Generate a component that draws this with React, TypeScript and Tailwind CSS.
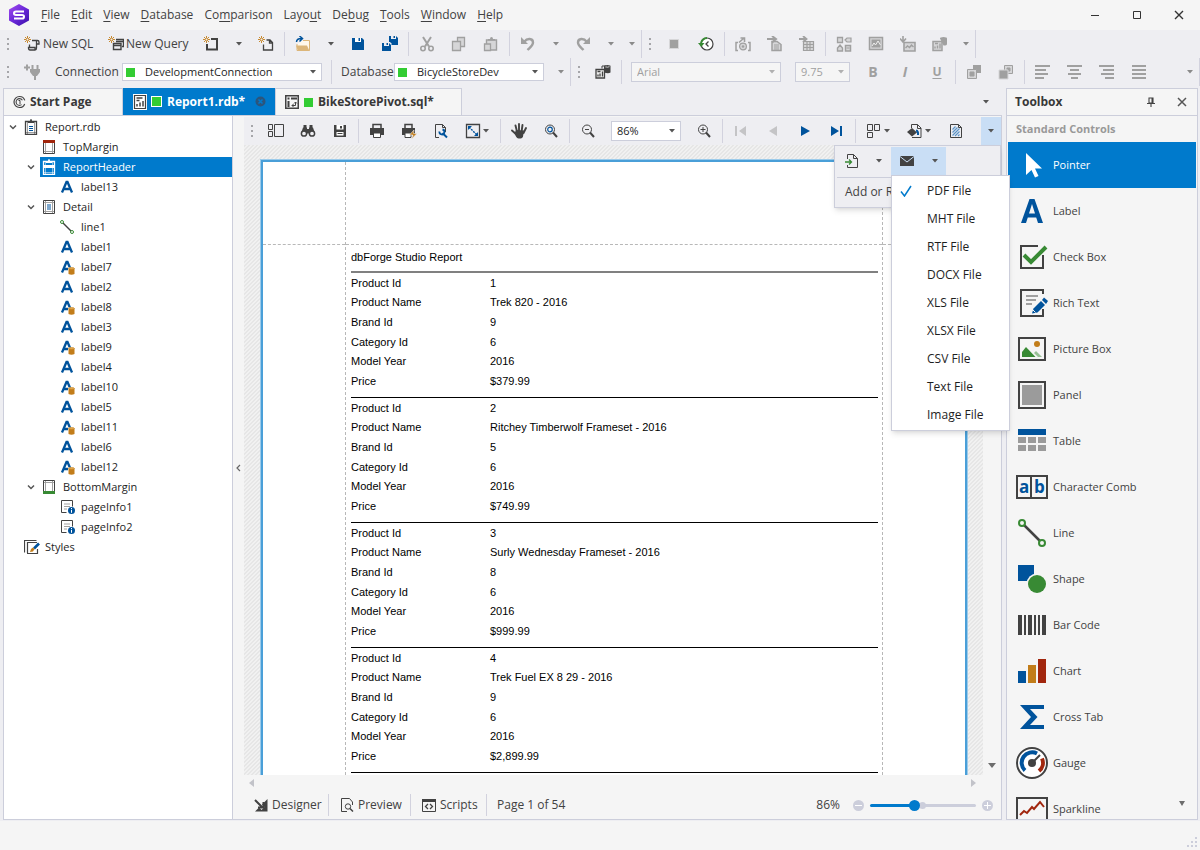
import { useState, type ReactNode } from "react";
import { clsx } from "clsx";

const DARK = "#424242";
const GREY = "#a0a0a0";
const PALE = "#d6d6d8";
const BLUE = "#00539c";
const GREEN = "#388a34";
const ORANGE = "#c27d1a";
const RED = "#a1260d";

type IconProps = { children: ReactNode; w?: number; h?: number };

const Icon = ({ children, w = 16, h = 16 }: IconProps) => (
  <svg width={w} height={h} viewBox={`0 0 ${w} ${h}`} fill="none" aria-hidden="true" className="shrink-0">
    {children}
  </svg>
);

const Caret = ({ className = "text-[#555]" }: { className?: string }) => (
  <svg width="6" height="4" viewBox="0 0 6 4" aria-hidden="true" className={clsx("shrink-0", className)}>
    <path d="M0 0h6L3 3.5z" fill="currentColor" />
  </svg>
);

/* ---------- toolbar icons ---------- */

const Spark = () => (
  <>
    <path d="M3.500 0v7M0 3.500h7M1 1l5 5M6 1L1 6" stroke={ORANGE} strokeWidth=".9" />
    <circle cx="3.500" cy="3.500" r="1" fill="#eeeef2" />
  </>
);

const icons = {
  newSql: (
    <Icon>
      <Spark />
      <path d="M8 4.500h5.500q1.500 0 1.500 1.500v2h-2.500M12.500 5v7q0 2-1.500 2H6q-1.500 0-1.500-2v-.500h6.500V14M5.500 11V8.500" stroke={DARK} strokeWidth="1.300" />
    </Icon>
  ),
  newQuery: (
    <Icon>
      <Spark />
      <path d="M8 3.500h7.500v7H14M8 5.500h7.500M5.500 7.500h7.500v6H5.500zM5.500 9.500H13" stroke={DARK} strokeWidth="1.400" />
    </Icon>
  ),
  newObject: (
    <Icon>
      <Spark />
      <path d="M8 3h6v10.500H4V8" stroke={DARK} strokeWidth="2" />
    </Icon>
  ),
  newDocument: (
    <Icon>
      <Spark />
      <path d="M8.500 4H12l2.500 2.500V14h-9V8.500M11.500 4v3h3" stroke={DARK} strokeWidth="1.300" />
    </Icon>
  ),
  open: (
    <Icon>
      <path d="M8 4.500h6.500v10H2V8" fill="#fff8ec" stroke="#dcb67a" />
      <path d="M1 9.500h11l2.500 5.500H3z" fill="#dcb67a" />
      <path d="M1.500 6c0-3 2-3.500 5-3.500M4.500 0L7.500 2.500l-3 3" stroke={BLUE} strokeWidth="1.500" />
    </Icon>
  ),
  save: (
    <Icon>
      <path d="M2 2h10l2 2v10H2z" fill={BLUE} />
      <path d="M5 2h6v4H5z" fill="#fff" />
      <path d="M8.500 2H10v3H8.500z" fill={BLUE} />
    </Icon>
  ),
  saveAll: (
    <Icon>
      <path d="M7 0h7l2 2v7H7z" fill={BLUE} />
      <path d="M9 0h5v3H9z" fill="#eeeef2" />
      <path d="M11.500 0H13v2h-1.500z" fill={BLUE} />
      <path d="M0 6h8l1.500 1.500V16H0z" fill="#eeeef2" />
      <path d="M0 7h7l2 2v6H0z" fill={BLUE} />
      <path d="M2 7h5v3H2z" fill="#eeeef2" />
      <path d="M4.500 7H6v2H4.500z" fill={BLUE} />
    </Icon>
  ),
  cut: (
    <Icon>
      <path d="M4 1l6 9.500M12 1L6 10.500" stroke={GREY} strokeWidth="2" />
      <circle cx="4" cy="12.500" r="2.200" stroke={GREY} strokeWidth="1.600" />
      <circle cx="12" cy="12.500" r="2.200" stroke={GREY} strokeWidth="1.600" />
    </Icon>
  ),
  copy: (
    <Icon>
      <path d="M6.500 1.500h7v9h-7z" fill={PALE} stroke={GREY} strokeWidth="1.300" />
      <path d="M1.500 5.500h8v9h-8z" fill={PALE} stroke={GREY} strokeWidth="1.300" />
    </Icon>
  ),
  paste: (
    <Icon>
      <path d="M3.500 4h10v10h-10z" fill={PALE} stroke={GREY} strokeWidth="1.400" />
      <path d="M5 4.500V3h2q0-2 1.500-2T10 3h2v1.500z" fill={GREY} />
      <path d="M1.500 8h6v6.500h-6z" fill={PALE} stroke={GREY} strokeWidth="1.300" />
    </Icon>
  ),
  undo: (
    <Icon>
      <path d="M1 1v7h7z" fill={GREY} />
      <path d="M4.500 5.500C7 2 13 2 13 6.500c0 3-3 5-5.500 7.500" stroke={GREY} strokeWidth="2.400" />
    </Icon>
  ),
  redo: (
    <Icon>
      <path d="M15 1v7H8z" fill={GREY} />
      <path d="M11.500 5.500C9 2 3 2 3 6.500c0 3 3 5 5.500 7.500" stroke={GREY} strokeWidth="2.400" />
    </Icon>
  ),
  stop: (
    <Icon>
      <path d="M3.500 3.500h9v9h-9z" fill={GREY} stroke={PALE} />
    </Icon>
  ),
  history: (
    <Icon>
      <circle cx="9" cy="8" r="6" stroke={DARK} strokeWidth="1.200" fill="#fff" />
      <path d="M9 2a6 6 0 0 0-6 6" stroke={GREEN} strokeWidth="2" />
      <path d="M0 7h6.500L3.200 11z" fill={GREEN} />
      <path d="M10.500 5.500L8 8l2.500 2.500" stroke={DARK} strokeWidth="1.300" />
    </Icon>
  ),
  mail: (
    <Icon>
      <path d="M3 6.500H1v8h2M13 6.500h2v8h-2" stroke={GREY} strokeWidth="1.500" />
      <circle cx="8" cy="10.500" r="3.400" stroke={GREY} strokeWidth="1.200" fill={PALE} />
      <circle cx="8" cy="10.500" r="1.300" fill={GREY} />
      <path d="M4 6.500L8.500 2.500M5.500 2h4v4" stroke={GREY} strokeWidth="1.600" />
    </Icon>
  ),
  importDoc: (
    <Icon>
      <path d="M5 5.500h5l4 3v6H5z" stroke={GREY} strokeWidth="1.500" fill={PALE} />
      <path d="M7 9h5M7 11h5M7 13h5" stroke={GREY} />
      <path d="M0 3h8M5 0l4 3-4 3.500" stroke={GREY} strokeWidth="2" />
    </Icon>
  ),
  importGrid: (
    <Icon>
      <path d="M4.500 5.500h10v9h-10zM8 5v9.500M11 5v9.500M4.500 8.500h10M4.500 11.500h10" stroke={GREY} strokeWidth="1.200" fill={PALE} />
      <path d="M0 3h7M4 0l3.500 3L4 6" stroke={GREY} strokeWidth="1.800" />
    </Icon>
  ),
  diagram: (
    <Icon>
      <path d="M1.500 1.500h5v5h-5z" stroke={GREY} strokeWidth="1.300" fill={PALE} />
      <path d="M9.500 9.500h5v5.500h-5z" stroke={GREY} strokeWidth="1.500" fill={PALE} />
      <path d="M9 4l2-2h4v4h-4z" stroke={GREY} strokeWidth="1.200" fill={PALE} />
      <path d="M4 9l2.500 3v3h-5v-3z" stroke={GREY} strokeWidth="1.400" fill={PALE} />
      <path d="M10.500 12h3" stroke={GREY} />
    </Icon>
  ),
  chartBox: (
    <Icon>
      <path d="M1.500 1.500h13v12h-13z" stroke={GREY} strokeWidth="1.500" fill={PALE} />
      <path d="M3.500 3.500h9v8h-9z" fill={GREY} />
      <path d="M4 10l2-3 1.500 2L10 5l2.500 4" stroke="#eee" />
    </Icon>
  ),
  chartImport: (
    <Icon>
      <path d="M4 6.500h11v8.500H4z" stroke={GREY} strokeWidth="1.600" fill={PALE} />
      <path d="M5.500 12l2-2 2 1.500 2-2.500 2 2" stroke={GREY} strokeWidth="1.400" />
      <path d="M3 0v6M0 2.500L3 6l3-3.500" stroke={GREY} strokeWidth="1.600" />
    </Icon>
  ),
  reportDb: (
    <Icon>
      <path d="M8 2.500q0-1.500 3.500-1.500t3.500 1.500v5.500q0 1.500-3.500 1.500z" fill={GREY} />
      <path d="M1 5.500h9v9H1z" stroke={GREY} strokeWidth="1.500" fill={PALE} />
      <path d="M3 12.500v-2M5.500 12.500v-3M8 12.500v-5M3 7.500h3" stroke={GREY} strokeWidth="1.400" />
    </Icon>
  ),
  plug: (
    <Icon>
      <path d="M0 3.500h6M3 .500v6" stroke={GREY} strokeWidth="2" />
      <path d="M6 5h10v3l-3 4h-4L6 8z" fill={GREY} />
      <path d="M8.500 1v4M13.500 1v4M11 11v5" stroke={GREY} strokeWidth="2" />
    </Icon>
  ),
  reportData: (
    <Icon>
      <path d="M9 2.500q0-1.500 3.500-1.500T15.500 2.500v6q-2 1.500-6.500 0z" fill={DARK} />
      <path d="M10 2.700q2.500 1 4.500 0" stroke="#eee" strokeWidth=".8" />
      <path d="M7 4.500V2h4" stroke={DARK} />
      <path d="M1 5.500h8.500v8.500H1z" stroke={DARK} strokeWidth="1.300" fill="#eee" />
      <path d="M3 12.500v-2M5 12.500v-3M7.500 12.500v-5M2.500 7.500h3" stroke={DARK} strokeWidth="1.300" />
    </Icon>
  ),
  toFront: (
    <Icon>
      <path d="M7 1h8v8H7z" fill={GREY} />
      <path d="M1.500 5.500h9v9h-9z" fill={PALE} stroke={GREY} />
      <path d="M4 8h4v4H4z" fill={GREY} stroke={GREY} />
    </Icon>
  ),
  toBack: (
    <Icon>
      <path d="M6.500 1.500h8v8h-8z" fill={PALE} stroke={GREY} />
      <path d="M9 4h3v3H9z" fill={GREY} stroke={GREY} />
      <path d="M1 6h9v9H1z" fill={GREY} stroke={PALE} />
    </Icon>
  ),
  alignLeft: (
    <Icon>
      <path d="M0 2h15M0 6h11M0 10h13M0 14h9" stroke={GREY} strokeWidth="2" />
    </Icon>
  ),
  alignCenter: (
    <Icon>
      <path d="M0 2h15M3 6h9M1 10h13M4 14h7" stroke={GREY} strokeWidth="2" />
    </Icon>
  ),
  alignRight: (
    <Icon>
      <path d="M0 2h15M4 6h11M2 10h13M6 14h9" stroke={GREY} strokeWidth="2" />
    </Icon>
  ),
  justify: (
    <Icon>
      <path d="M1 2h14M1 6h14M1 10h14M1 14h14" stroke={GREY} strokeWidth="2" />
    </Icon>
  ),

  /* preview toolbar */
  documentMap: (
    <Icon>
      <path d="M.500 1.500h4v5h-4zM.500 8.500h4v5h-4zM6.500 1.500h9v12h-9z" stroke={DARK} />
    </Icon>
  ),
  search: (
    <Icon>
      <path d="M3.500 2h3v3h-3zM9.500 2h3v3h-3z" fill={DARK} />
      <path d="M3 4.500h4V6h2V4.500h4l2 6H1z" fill={DARK} />
      <circle cx="4" cy="10.500" r="2.600" stroke={DARK} strokeWidth="1.500" fill="#eeeef2" />
      <circle cx="12" cy="10.500" r="2.600" stroke={DARK} strokeWidth="1.500" fill="#eeeef2" />
    </Icon>
  ),
  saveDark: (
    <Icon>
      <path d="M2 2h12v12H2z" fill={DARK} />
      <path d="M4.500 2h7v4.500h-7zM4.500 9h7v3.500h-7z" fill="#fff" />
      <path d="M8 3h2v2.500H8zM5.500 10h5v1h-5z" fill={DARK} />
    </Icon>
  ),
  print: (
    <Icon>
      <path d="M4 5V1.500h8V5" stroke={DARK} strokeWidth="1.500" />
      <path d="M1 5h14v7H1z" fill={DARK} />
      <path d="M4.500 10h7v4.500h-7z" fill="#fff" stroke={DARK} />
    </Icon>
  ),
  quickPrint: (
    <Icon>
      <path d="M4 5V1.500h7V5" stroke={DARK} strokeWidth="1.500" />
      <path d="M1 5h13v7H1z" fill={DARK} />
      <path d="M4 10h6v4.500H4z" fill="#fff" stroke={DARK} />
      <path d="M13 7L8.500 12H12l-1.500 4L16 10.500h-3.500z" fill={ORANGE} stroke="#eeeef2" strokeWidth=".6" />
    </Icon>
  ),
  pageSetup: (
    <Icon>
      <path d="M6 14.500H2.500v-13h7l3 3V9M9.500 1.500v3h3" stroke={DARK} />
      <path d="M9.500 10l4.500 4.500" stroke={BLUE} strokeWidth="2" />
      <path d="M6.500 8.500a2.500 2.500 0 1 0 3-2" stroke={BLUE} strokeWidth="1.800" />
    </Icon>
  ),
  scale: (
    <Icon>
      <path d="M1.500 1.500h13v13h-13z" stroke={DARK} strokeWidth="1.300" />
      <path d="M4 4l8 8" stroke={BLUE} strokeWidth="1.400" strokeDasharray="2 1" />
      <path d="M3 3h4L3 7zM13 13H9l4-4z" fill={BLUE} />
    </Icon>
  ),
  hand: (
    <Icon>
      <path d="M4.500 2.500l1.500 6M8 1v7M11.500 2L10.500 9M15 5l-2.500 5M1 7.500L6 12" stroke={DARK} strokeWidth="1.900" strokeLinecap="round" />
      <path d="M5 7l8 .5-1 6q-.5 2-2.500 2h-2q-1.500 0-2.500-2l-1.500-3z" fill={DARK} />
    </Icon>
  ),
  magnifier: (
    <Icon>
      <circle cx="7" cy="6.500" r="4.500" stroke={DARK} />
      <circle cx="7" cy="6.500" r="2.300" stroke={BLUE} strokeWidth="1.200" />
      <path d="M10 9.500L14 14" stroke={DARK} strokeWidth="2" />
    </Icon>
  ),
  zoomOut: (
    <Icon>
      <circle cx="7" cy="6.500" r="4.500" stroke={DARK} />
      <path d="M5 6.500h4" stroke={DARK} />
      <path d="M10 9.500L14 14" stroke={DARK} strokeWidth="2" />
    </Icon>
  ),
  zoomIn: (
    <Icon>
      <circle cx="7" cy="6.500" r="4.500" stroke={DARK} />
      <path d="M4.500 6.500h5M7 4v5" stroke={DARK} />
      <path d="M10 9.500L14 14" stroke={DARK} strokeWidth="2" />
    </Icon>
  ),
  first: (
    <Icon>
      <path d="M2 3h2v10H2zM13 3v10L6 8z" fill="#c4c4c6" />
    </Icon>
  ),
  previous: (
    <Icon>
      <path d="M12 3v10L4 8z" fill="#c4c4c6" />
    </Icon>
  ),
  next: (
    <Icon>
      <path d="M4 3v10l9-5z" fill={BLUE} />
    </Icon>
  ),
  last: (
    <Icon>
      <path d="M2 3v10l8-5zM11 3h2v10h-2z" fill={BLUE} />
    </Icon>
  ),
  pages: (
    <Icon>
      <path d="M1.500 1.500h5v6h-5zM8.500 1.500h5v6h-5zM1.500 9.500h5v5h-5z" stroke={DARK} />
    </Icon>
  ),
  pageColor: (
    <Icon>
      <path d="M4.500 5V1.500h6l3.500 3.500v9.500H5M10.500 1.500v4H14" stroke={DARK} />
      <path d="M0 9l5-4 5 4.500-5 4z" fill={DARK} />
      <path d="M9 7.500q2.500.5 2 4.500" stroke={BLUE} strokeWidth="2" />
    </Icon>
  ),
  watermark: (
    <Icon>
      <path d="M2.500 1.500h8l3 3v10h-11zM10.500 1.500v3h3" stroke={DARK} />
      <path d="M4.500 6.500l3-3M4.500 9.500l5-5M4.500 12.500l7-7M7 13l4.500-4.500M10 13l1.500-1.500" stroke="#5a93c7" strokeWidth="1.200" />
    </Icon>
  ),
  exportDoc: (
    <Icon>
      <path d="M3.500 6V1.500h6l4 4v9h-10V12M9.500 1.500v4h4" stroke={DARK} />
      <path d="M1 9h6M5 6.500L7.500 9 5 11.500" stroke={GREEN} strokeWidth="1.300" />
    </Icon>
  ),
  envelope: (
    <Icon>
      <path d="M1 3h14v10H1z" fill={DARK} />
      <path d="M1 3.500l7 5.500 7-5.500" stroke="#c9def5" />
    </Icon>
  ),
  designer: (
    <Icon w={14} h={14}>
      <path d="M13.500 1v12.500H1z" fill={DARK} />
      <path d="M1 2.500l8 8" stroke="#f5f5f5" strokeWidth="4" />
      <path d="M1 2l7.500 7.500M4 9.500h5.500V4" stroke={DARK} strokeWidth="2" />
    </Icon>
  ),
  preview: (
    <Icon w={14} h={14}>
      <path d="M12.500 7V4L9.500.500h-8v13H7" stroke={DARK} />
      <circle cx="8" cy="8.500" r="2.700" stroke={DARK} />
      <path d="M10 10.500l3 3" stroke={DARK} strokeWidth="1.500" />
    </Icon>
  ),
  scripts: (
    <Icon w={14} h={14}>
      <path d="M.500 1.500h13v12H.500z" stroke={DARK} />
      <path d="M0 1h14v3H0z" fill={DARK} />
      <path d="M6 6L3.500 8.500 6 11M8 6l2.500 2.500L8 11" stroke={DARK} strokeWidth="1.300" />
    </Icon>
  ),
};

type IconName = keyof typeof icons;

/* ---------- tree icons ---------- */

const TreeIcon = ({ kind }: { kind: string }) => {
  switch (kind) {
    case "report":
    case "header": {
      const c = kind === "header" ? "#fff" : DARK;
      return (
        <Icon w={14}>
          <path d="M1.500 2.500h11v13h-11z" stroke={c} strokeWidth="1.300" />
          <path d="M3.500 3v12.500M10.500 3v12.500M1.500 13.500h11" stroke={c} strokeOpacity=".5" />
          <path d="M4 4V2h2q0-2 1-2t1 2h2v2z" fill={c} />
          {kind === "header" ? (
            <path d="M2 6h10v3H2z" fill="#fff" />
          ) : (
            <path d="M5 7.500h4M5 9.500h4M5 11.500h4" stroke={BLUE} />
          )}
        </Icon>
      );
    }
    case "top":
    case "bottom":
      return (
        <Icon w={14}>
          <path d="M1.500 1.500h11v13h-11z" stroke={DARK} />
          <path d="M3.500 2v12M10.500 2v12M2 3.500h10M2 12.500h10" stroke={GREY} />
          {kind === "top" ? <path d="M1 1h12v3H1z" fill={RED} /> : <path d="M1 12h12v3H1z" fill={GREEN} />}
        </Icon>
      );
    case "detail":
      return (
        <Icon w={14}>
          <path d="M1.500 1.500h11v13h-11z" stroke={DARK} />
          <path d="M3.500 2v12M10.500 2v12M2 3.500h10M2 12.500h10" stroke={GREY} />
          <path d="M5 6h4M5 8h4M5 10h4" stroke={BLUE} strokeWidth="1.200" />
        </Icon>
      );
    case "line":
      return (
        <Icon w={14}>
          <path d="M3 4l8 8" stroke={DARK} strokeWidth="1.500" />
          <circle cx="2" cy="3" r="1.500" stroke={GREEN} />
          <circle cx="12" cy="13" r="1.500" stroke={GREEN} />
        </Icon>
      );
    case "bound":
    case "label":
      return (
        <Icon w={16}>
          <path d="M2 13.500L6.500 3h1L12 13.500M3.800 10h6.400" stroke={BLUE} strokeWidth="2.300" />
          {kind === "bound" && (
            <>
              <path d="M8 8.500h7v7.500H8z" fill="#fff" />
              <path d="M8.500 9.500h6V15q-3 1.500-6 0z" fill={ORANGE} />
              <ellipse cx="11.500" cy="9.500" rx="3" ry="1" fill="#e0a850" stroke={ORANGE} strokeWidth=".6" />
            </>
          )}
        </Icon>
      );
    case "pageInfo":
      return (
        <Icon>
          <path d="M1.500 1.500h11v6M6.500 13.500h-5v-12" stroke={DARK} />
          <path d="M4 5h6M4 7.500h6M4 10h3" stroke={GREY} />
          <circle cx="11.500" cy="11.500" r="3.500" fill={BLUE} />
          <path d="M11.500 9v1M11.500 10.800v3" stroke="#fff" />
        </Icon>
      );
    default:
      return (
        <Icon>
          <path d="M12.500 1.500h-12v12M3 14.500h10.500V10M3.500 14V3.500h9.500" stroke={DARK} strokeWidth="1.200" />
          <path d="M15 4.500L10 9.500" stroke={BLUE} strokeWidth="2.600" />
          <path d="M6 13l1-3 2-1.500 1.500 1.500L9 12.500z" fill={ORANGE} />
        </Icon>
      );
  }
};

/* ---------- toolbox icons ---------- */

const toolIcons: Record<string, ReactNode> = {
  Pointer: <path d="M10 4v22l5.500-5 3.500 7.500 3.500-1.500L19 19.500h7z" fill="#fff" />,
  Label: <path d="M5 28L13.500 4h5L27 28h-5l-1.800-5.500h-8.400L10 28zM13 18.500h6L16 9z" fill={BLUE} fillRule="evenodd" />,
  "Check Box": (
    <>
      <path d="M22 5H5v22h22V14" stroke={DARK} strokeWidth="2" />
      <path d="M8 14l7 7L30 6" stroke={GREEN} strokeWidth="4" />
    </>
  ),
  "Rich Text": (
    <>
      <path d="M27 7V3H5v26h22v-7" stroke={DARK} strokeWidth="2" />
      <path d="M10 9h12M10 13h10M10 17h6" stroke={GREY} strokeWidth="2" />
      <path d="M16 26.500l1.500-5L25 14l4 4-7.500 7.500z" fill={BLUE} />
      <path d="M26 13l2-2.500 4 3.500-2 3z" fill={BLUE} />
      <path d="M17 23l2.500 2.500" stroke="#f5f5f5" />
    </>
  ),
  "Picture Box": (
    <>
      <path d="M3 5h26v22H3z" stroke={DARK} strokeWidth="2" />
      <path d="M6 24v-5l4-5 9.500 10z" fill={GREEN} />
      <path d="M18 20l2-2 6 6h-4z" fill={GREEN} fillOpacity=".5" />
      <circle cx="21" cy="11" r="3" fill={ORANGE} />
    </>
  ),
  Panel: (
    <>
      <path d="M3 3h26v26H3z" stroke={DARK} strokeWidth="2" />
      <path d="M6 6h20v20H6z" fill="#9b9b9b" />
    </>
  ),
  Table: (
    <>
      <path d="M2 4h28v6H2z" fill={BLUE} />
      <path d="M2 12h8v6H2zM12 12h8v6h-8zM22 12h8v6h-8zM2 20h8v6H2zM12 20h8v6h-8zM22 20h8v6h-8z" fill="#9b9b9b" />
    </>
  ),
  "Character Comb": (
    <>
      <path d="M1 5h30v22H1zM15 5v22" stroke={DARK} strokeWidth="2" />
      <text x="3" y="22" fontSize="17" fontWeight="700" fontFamily="Open Sans, sans-serif" fill={BLUE}>a</text>
      <text x="18" y="22" fontSize="17" fontWeight="700" fontFamily="Open Sans, sans-serif" fill={BLUE}>b</text>
    </>
  ),
  Line: (
    <>
      <path d="M8 8l16 16" stroke={DARK} strokeWidth="2.500" />
      <circle cx="6" cy="6" r="3" stroke={GREEN} strokeWidth="2" fill="#f5f5f5" />
      <circle cx="26" cy="26" r="3" stroke={GREEN} strokeWidth="2" fill="#f5f5f5" />
    </>
  ),
  Shape: (
    <>
      <path d="M2 2h16v16H2z" fill={BLUE} />
      <circle cx="21" cy="21" r="10.500" fill="#f5f5f5" />
      <circle cx="21" cy="21" r="9" fill={GREEN} />
    </>
  ),
  "Bar Code": <path d="M2 6h4v20H2zM8 6h2v20H8zM12 6h4v20h-4zM18 6h2v20h-2zM22 6h2v20h-2zM26 6h4v20h-4z" fill={DARK} />,
  Chart: (
    <>
      <path d="M2 16h8v12H2z" fill={BLUE} />
      <path d="M12 10h8v18h-8z" fill={ORANGE} />
      <path d="M22 4h8v24h-8z" fill={RED} />
    </>
  ),
  "Cross Tab": <path d="M4 4h24v4H14l7.500 8L14 24h14v4H4l11-12z" fill={BLUE} />,
  Gauge: (
    <>
      <circle cx="16" cy="16" r="15" stroke={DARK} strokeWidth="2" fill="#fff" />
      <path d="M9 23.500A10.500 10.500 0 0 1 21 6.500" stroke={BLUE} strokeWidth="4" />
      <path d="M26 11.500a10.500 10.500 0 0 1-3 12.500" stroke={RED} strokeWidth="4" />
      <circle cx="16" cy="16" r="4" fill={DARK} />
      <path d="M16 16l8-8" stroke={DARK} strokeWidth="2" />
    </>
  ),
  Sparkline: (
    <>
      <path d="M1 5h30v26H1z" stroke={DARK} strokeWidth="2" />
      <path d="M4 22l4-4 3 2 5-6 2 2 6-7 4 5" stroke={RED} strokeWidth="2" />
    </>
  ),
};

/* ---------- building blocks ---------- */

const Separator = () => <span className="mx-[2px] h-6 w-px shrink-0 bg-[#d2d2de]" />;

const EndSeparator = () => <span className="h-7 w-px shrink-0 bg-[#d2d2de]" />;

const Grip = () => (
  <span className="flex w-4 shrink-0 flex-col items-center gap-[3px]">
    <span className="size-[2px] bg-[#a6a6aa]" />
    <span className="size-[2px] bg-[#a6a6aa]" />
    <span className="size-[2px] bg-[#a6a6aa]" />
  </span>
);

const ToolButton = ({ name, label }: { name: IconName; label?: string }) => (
  <button type="button" aria-label={label ?? name} className="flex h-6 w-8 shrink-0 items-center justify-center">
    {icons[name]}
  </button>
);

const CaretButton = ({ label, className }: { label: string; className?: string }) => (
  <button type="button" aria-label={label} className="flex h-6 w-[23px] shrink-0 items-center justify-center">
    <Caret className={className} />
  </button>
);

const MoreButton = () => (
  <button type="button" aria-label="More" className="flex h-6 w-[19px] shrink-0 items-center justify-center">
    <Caret className="text-[#8a8a8a]" />
  </button>
);

const SplitButton = ({ name }: { name: IconName }) => (
  <button type="button" aria-label={name} className="flex h-6 w-[41px] shrink-0 items-center gap-[2px] pl-2">
    {icons[name]}
    <Caret />
  </button>
);

type ComboProps = { id: string; label: string; value: string; className: string; dot?: boolean; disabled?: boolean };

const Combo = ({ id, label, value, className, dot, disabled }: ComboProps) => (
  <span className={clsx("relative flex shrink-0 items-center", className)}>
    <select
      id={id}
      aria-label={label}
      disabled={disabled}
      className={clsx(
        "h-full w-full appearance-none border border-[#cccedb] text-[11px] leading-4 outline-none",
        dot ? "pl-[22px]" : "pl-[5px]",
        disabled ? "bg-[#f5f5f5] text-[#a0a0a0] opacity-100" : "bg-white text-[#1e1e1e]"
      )}
    >
      <option>{value}</option>
    </select>
    {dot && <span className="pointer-events-none absolute left-1 size-[9px] bg-[#33cc33]" />}
    <span className="pointer-events-none absolute right-[6px]">
      <Caret className={disabled ? "text-[#b0b0b0]" : "text-[#555]"} />
    </span>
  </span>
);

/* ---------- title and toolbars ---------- */

const menuItems: [string, string, string][] = [
  ["", "F", "ile"],
  ["", "E", "dit"],
  ["", "V", "iew"],
  ["", "D", "atabase"],
  ["Co", "m", "parison"],
  ["Layo", "u", "t"],
  ["De", "b", "ug"],
  ["", "T", "ools"],
  ["", "W", "indow"],
  ["", "H", "elp"],
];

const TitleBar = () => (
  <header className="flex h-[30px] shrink-0 items-center bg-[#f5f5f5] pl-2">
    <svg width="22" height="24" viewBox="0 0 22 24" aria-hidden="true">
      <defs>
        <linearGradient id="brand" x1="0" y1="0" x2="1" y2="1">
          <stop offset="0" stopColor="#a44cf0" />
          <stop offset=".5" stopColor="#6a28d8" />
          <stop offset="1" stopColor="#3a10a8" />
        </linearGradient>
      </defs>
      <path d="M11 1l10 5.500v11L11 23 1 17.500v-11z" fill="url(#brand)" />
      <path d="M16 8.500H8q-2 0-2 1.700T8 12h6q2 0 2 1.800t-2 1.700H6" stroke="#fff" strokeWidth="2" fill="none" />
    </svg>
    <nav className="ml-[6px] flex gap-px">
      {menuItems.map(([before, key, after]) => (
        <button key={before + key + after} type="button" className="px-[5px] text-xs">
          {before}
          <span className="underline underline-offset-2">{key}</span>
          {after}
        </button>
      ))}
    </nav>
    <div className="ml-auto flex">
      <button type="button" aria-label="Minimize" className="flex w-[42px] justify-center">
        <svg width="10" height="10" viewBox="0 0 10 10"><path d="M1 5.500h8" stroke="#333" /></svg>
      </button>
      <button type="button" aria-label="Maximize" className="flex w-[42px] justify-center">
        <svg width="10" height="10" viewBox="0 0 10 10" fill="none"><path d="M1.500 1.500h7v7h-7z" stroke="#333" /></svg>
      </button>
      <button type="button" aria-label="Close" className="flex w-[42px] justify-center">
        <svg width="10" height="10" viewBox="0 0 10 10"><path d="M1 1l8 8M9 1L1 9" stroke="#333" strokeWidth="1.400" /></svg>
      </button>
    </div>
  </header>
);

const StandardToolbar = () => (
  <div className="flex h-7 shrink-0 items-center">
    <Grip />
    <button type="button" className="flex h-6 w-[84px] items-center gap-[3px] pl-2 text-xs whitespace-nowrap">
      {icons.newSql}New SQL
    </button>
    <button type="button" className="flex h-6 w-[95px] items-center gap-[2px] pl-2 text-xs whitespace-nowrap">
      {icons.newQuery}New Query
    </button>
    <ToolButton name="newObject" />
    <CaretButton label="New object options" />
    <ToolButton name="newDocument" />
    <Separator />
    <ToolButton name="open" />
    <CaretButton label="Open options" />
    <ToolButton name="save" />
    <ToolButton name="saveAll" />
    <Separator />
    <ToolButton name="cut" />
    <ToolButton name="copy" />
    <ToolButton name="paste" />
    <Separator />
    <ToolButton name="undo" />
    <CaretButton label="Undo options" className="text-[#8a8a8a]" />
    <ToolButton name="redo" />
    <CaretButton label="Redo options" className="text-[#8a8a8a]" />
    <MoreButton />
    <EndSeparator />
    <Grip />
    <ToolButton name="stop" />
    <ToolButton name="history" />
    <Separator />
    <ToolButton name="mail" />
    <ToolButton name="importDoc" />
    <ToolButton name="importGrid" />
    <Separator />
    <ToolButton name="diagram" />
    <ToolButton name="chartBox" />
    <ToolButton name="chartImport" />
    <ToolButton name="reportDb" />
    <MoreButton />
    <EndSeparator />
  </div>
);

const ConnectionToolbar = () => (
  <div className="flex h-7 shrink-0 items-center">
    <Grip />
    <ToolButton name="plug" />
    <label htmlFor="connection" className="w-[74px] shrink-0 pl-[7px] text-xs">Connection</label>
    <Combo id="connection" label="Connection" value="DevelopmentConnection" dot className="mr-[7px] h-[18px] w-[200px]" />
    <Separator />
    <label htmlFor="database" className="w-[60px] shrink-0 pl-[7px] text-xs">Database</label>
    <Combo id="database" label="Database" value="BicycleStoreDev" dot className="mr-[7px] h-[18px] w-[150px]" />
    <MoreButton />
    <EndSeparator />
    <Grip />
    <ToolButton name="reportData" />
    <Separator />
    <Combo id="font" label="Font" value="Arial" disabled className="ml-[7px] h-5 w-[150px]" />
    <Combo id="font-size" label="Font size" value="9.75" disabled className="mx-[14px] mr-[7px] h-5 w-[55px]" />
    <button type="button" className="w-8 shrink-0 text-sm font-bold text-[#a0a0a0]">B</button>
    <button type="button" className="w-8 shrink-0 text-sm font-bold text-[#a0a0a0] italic">I</button>
    <button type="button" className="w-8 shrink-0 text-xs font-bold text-[#a0a0a0] underline underline-offset-2">U</button>
    <Separator />
    <ToolButton name="toFront" />
    <ToolButton name="toBack" />
    <Separator />
    <ToolButton name="alignLeft" />
    <ToolButton name="alignCenter" />
    <ToolButton name="alignRight" />
    <ToolButton name="justify" />
    <span className="flex-1" />
    <MoreButton />
    <EndSeparator />
  </div>
);

const DocumentTabs = () => (
  <div className="flex h-[28px] shrink-0 items-stretch border-b border-[#cccedb] text-xs font-bold text-[#383838]">
    <button type="button" className="flex w-[120px] shrink-0 items-center gap-1 border border-b-0 border-[#cccedb] bg-[#f5f5f5] pl-[9px]">
      <Icon w={13} h={14}>
        <circle cx="6.500" cy="7" r="5.500" stroke={DARK} strokeWidth="1.200" strokeDasharray="30 4.500" strokeDashoffset="-2" />
        <circle cx="6.500" cy="7" r="3.400" stroke={DARK} strokeWidth="1.100" strokeDasharray="16 5" strokeDashoffset="-3" />
        <path d="M5.500 5.500H7V9" stroke={DARK} />
      </Icon>
      Start Page
    </button>
    <button type="button" className="flex w-[152px] shrink-0 items-center bg-[#007acc] pl-[10px] text-white">
      <Icon w={14} h={16}>
        <path d="M0 0h14v16H0z" fill="#fff" />
        <path d="M1.500 1.500h11v13h-11z" stroke={DARK} strokeWidth="1.200" />
        <path d="M3.500 4h6M3.500 6.500h3M4 12.500V10M7 12.500V8.500M10 12.500V7" stroke={DARK} strokeWidth="1.500" />
      </Icon>
      <span className="ml-1 size-[11px] border border-white bg-[#33cc33]" />
      <span className="ml-[5px]">Report1.rdb*</span>
      <svg width="11" height="11" viewBox="0 0 11 11" className="mr-[9px] ml-auto" aria-hidden="true">
        <circle cx="5.500" cy="5.500" r="5" fill="#2b557c" />
        <path d="M3.500 3.500l4 4M7.500 3.500l-4 4" stroke="#007acc" strokeWidth="1.500" />
      </svg>
    </button>
    <button type="button" className="flex w-[187px] shrink-0 items-center border border-b-0 border-[#cccedb] bg-[#f5f5f5] pl-[9px]">
      <Icon w={14} h={14}>
        <path d="M.750.750h12.500v12.500H.750z" stroke={DARK} strokeWidth="1.500" />
        <path d="M2.500 2.500h2v2h-2zM6 2.500h6v2H6zM2.500 6h2v6h-2z" fill={DARK} />
        <path d="M7 10.500h3.500V7M9 8.500L10.500 7 12 8.500M8.500 9L7 10.500 8.500 12" stroke={DARK} />
      </Icon>
      <span className="ml-[5px] size-[9px] bg-[#33cc33]" />
      <span className="ml-[5px]">BikeStorePivot.sql*</span>
    </button>
    <button type="button" aria-label="Open documents" className="ml-auto flex w-8 items-center justify-center">
      <Caret />
    </button>
  </div>
);

/* ---------- report tree ---------- */

type TreeNode = { text: string; kind: string; level: number; open?: boolean };

const tree: TreeNode[] = [
  { text: "Report.rdb", kind: "report", level: 0, open: true },
  { text: "TopMargin", kind: "top", level: 1 },
  { text: "ReportHeader", kind: "header", level: 1, open: true },
  { text: "label13", kind: "label", level: 2 },
  { text: "Detail", kind: "detail", level: 1, open: true },
  { text: "line1", kind: "line", level: 2 },
  { text: "label1", kind: "label", level: 2 },
  { text: "label7", kind: "bound", level: 2 },
  { text: "label2", kind: "label", level: 2 },
  { text: "label8", kind: "bound", level: 2 },
  { text: "label3", kind: "label", level: 2 },
  { text: "label9", kind: "bound", level: 2 },
  { text: "label4", kind: "label", level: 2 },
  { text: "label10", kind: "bound", level: 2 },
  { text: "label5", kind: "label", level: 2 },
  { text: "label11", kind: "bound", level: 2 },
  { text: "label6", kind: "label", level: 2 },
  { text: "label12", kind: "bound", level: 2 },
  { text: "BottomMargin", kind: "bottom", level: 1, open: true },
  { text: "pageInfo1", kind: "pageInfo", level: 2 },
  { text: "pageInfo2", kind: "pageInfo", level: 2 },
  { text: "Styles", kind: "styles", level: 0 },
];

const indents = ["pl-0", "pl-[18px]", "pl-[36px]"];

const ReportTree = () => {
  const [selected, setSelected] = useState("ReportHeader");
  return (
    <ul role="tree" className="w-[230px] shrink-0 border-x border-[#cccedb] bg-white pt-px text-[11px] leading-5 text-[#1e1e1e]">
      {tree.map((node) => (
        <li key={node.text} role="treeitem" className={clsx("flex h-5", indents[node.level])}>
          <span className="flex w-[18px] shrink-0 items-center justify-center">
            {node.open && (
              <svg width="8" height="6" viewBox="0 0 8 6" fill="none" aria-hidden="true">
                <path d="M1 1.500l3 3 3-3" stroke="#555" strokeWidth="1.500" />
              </svg>
            )}
          </span>
          <button
            type="button"
            onClick={() => setSelected(node.text)}
            className={clsx(
              "flex flex-1 items-center pl-[2px] text-left",
              selected === node.text && "bg-[#007acc] text-white"
            )}
          >
            <span className="flex w-[21px]">
              <TreeIcon kind={node.kind} />
            </span>
            {node.text}
          </button>
        </li>
      ))}
    </ul>
  );
};

/* ---------- preview ---------- */

const exportFormats = [
  "PDF File",
  "MHT File",
  "RTF File",
  "DOCX File",
  "XLS File",
  "XLSX File",
  "CSV File",
  "Text File",
  "Image File",
];

const OverflowPanel = () => (
  <div className="absolute top-7 right-0 z-10 w-[167px] border border-[#cccedb] bg-[#eeeef2] px-[2px] py-px shadow-md">
    <div className="relative flex h-7">
      <button type="button" aria-label="Export" className="flex w-[29px] items-center justify-center">
        {icons.exportDoc}
      </button>
      <button type="button" aria-label="Export options" className="flex w-[25px] items-center justify-center">
        <Caret />
      </button>
      <button type="button" aria-label="Send by e-mail" className="flex w-8 items-center justify-center bg-[#c9def5]">
        {icons.envelope}
      </button>
      <button type="button" aria-label="E-mail options" className="flex w-[23px] items-center justify-center bg-[#c9def5]">
        <Caret />
      </button>
      <ul role="menu" className="absolute top-7 left-[54px] w-[119px] border border-[#cccedb] bg-white py-px shadow-md">
        {exportFormats.map((format, i) => (
          <li key={format} role="none">
            <button type="button" role="menuitem" className="flex h-7 w-full items-center text-xs whitespace-nowrap text-[#1e1e1e]">
              <span className="flex w-[35px] pl-2">
                {i === 0 && (
                  <svg width="12" height="12" viewBox="0 0 12 12" fill="none" aria-hidden="true">
                    <path d="M1 6.500l3.500 4.500L11 1" stroke="#007acc" strokeWidth="1.500" />
                  </svg>
                )}
              </span>
              {format}
            </button>
          </li>
        ))}
      </ul>
    </div>
    <div className="mt-[2px] border-t border-[#cccedb] pl-2 text-xs leading-7 whitespace-nowrap">Add or R</div>
  </div>
);

const PreviewToolbar = () => (
  <div className="relative mt-px flex h-7 shrink-0 items-center bg-[#eeeef2]">
    <Grip />
    <ToolButton name="documentMap" />
    <ToolButton name="search" />
    <ToolButton name="saveDark" />
    <Separator />
    <ToolButton name="print" />
    <ToolButton name="quickPrint" />
    <ToolButton name="pageSetup" />
    <SplitButton name="scale" />
    <Separator />
    <ToolButton name="hand" />
    <ToolButton name="magnifier" />
    <Separator />
    <ToolButton name="zoomOut" />
    <Combo id="zoom" label="Zoom" value="86%" className="mx-[7px] h-5 w-[70px]" />
    <ToolButton name="zoomIn" />
    <Separator />
    <ToolButton name="first" />
    <ToolButton name="previous" />
    <ToolButton name="next" />
    <ToolButton name="last" />
    <Separator />
    <SplitButton name="pages" />
    <SplitButton name="pageColor" />
    <ToolButton name="watermark" />
    <button type="button" aria-label="Toolbar options" className="ml-auto flex h-7 w-5 shrink-0 items-center justify-center bg-[#c9def5]">
      <Caret />
    </button>
    <OverflowPanel />
  </div>
);

const products = [
  { id: 1, name: "Trek 820 - 2016", brand: 9, category: 6, year: 2016, price: "$379.99" },
  { id: 2, name: "Ritchey Timberwolf Frameset - 2016", brand: 5, category: 6, year: 2016, price: "$749.99" },
  { id: 3, name: "Surly Wednesday Frameset - 2016", brand: 8, category: 6, year: 2016, price: "$999.99" },
  { id: 4, name: "Trek Fuel EX 8 29 - 2016", brand: 9, category: 6, year: 2016, price: "$2,899.99" },
];

const ReportPage = () => (
  <div className="flex min-h-0 flex-1 border-2 border-b-0 border-[#4a9fd8] bg-white font-['Liberation_Sans',Arial,sans-serif] text-[11px] text-black shadow-[0_0_0_1px_#9ccbea]">
    <div className="w-[83px] shrink-0 border-r border-dashed border-[#b8b8b8]">
      <div className="h-[83px] border-b border-dashed border-[#b8b8b8]" />
    </div>
    <div className="min-w-0 flex-1">
      <div className="h-[83px] border-b border-dashed border-[#b8b8b8]" />
      <div className="pr-1 pl-[5px]">
        <h1 className="h-7 border-b-2 border-[#808080] leading-6">dbForge Studio Report</h1>
        {products.map((p) => (
          <div key={p.id} className="h-[125px] border-b border-black">
            <table className="h-[118px] w-full border-collapse text-left">
              <tbody>
                {[
                  ["Product Id", p.id],
                  ["Product Name", p.name],
                  ["Brand Id", p.brand],
                  ["Category Id", p.category],
                  ["Model Year", p.year],
                  ["Price", p.price],
                ].map(([field, value]) => (
                  <tr key={field}>
                    <th scope="row" className="w-[139px] p-0 leading-3 font-normal">{field}</th>
                    <td className="p-0 leading-3">{value}</td>
                  </tr>
                ))}
              </tbody>
            </table>
          </div>
        ))}
      </div>
    </div>
    <div className="w-[83px] shrink-0 border-l border-dashed border-[#b8b8b8]">
      <div className="h-[83px] border-b border-dashed border-[#b8b8b8]" />
    </div>
  </div>
);

const ViewBar = () => {
  const [position, setPosition] = useState(41);
  return (
    <div className="flex h-[28px] shrink-0 items-center text-xs">
      <button type="button" className="flex w-[84px] items-center gap-1 pl-[10px]">{icons.designer}Designer</button>
      <span className="h-[22px] w-px bg-[#d2d2de]" />
      <button type="button" className="flex w-[81px] items-center gap-1 pl-[11px]">{icons.preview}Preview</button>
      <span className="h-[22px] w-px bg-[#d2d2de]" />
      <button type="button" className="flex w-[75px] items-center gap-1 pl-[11px]">{icons.scripts}Scripts</button>
      <span className="h-[22px] w-px bg-[#d2d2de]" />
      <span className="pl-[10px]">Page 1 of 54</span>
      <label htmlFor="zoom-slider" className="ml-auto">86%</label>
      <button type="button" aria-label="Zoom out" className="mr-[6px] ml-[13px]">
        <svg width="11" height="11" viewBox="0 0 11 11">
          <circle cx="5.500" cy="5.500" r="5.500" fill="#cccedb" />
          <path d="M2 5.500h7" stroke="#fff" />
        </svg>
      </button>
      <span className="relative flex w-[106px] items-center">
        <span className="absolute left-[49px] size-[7px] rounded-full bg-[#cccedb]" />
        <input
          id="zoom-slider"
          type="range"
          value={position}
          onChange={(e) => setPosition(Number(e.target.value))}
          className="relative h-[3px] w-full appearance-none rounded-full [&::-webkit-slider-thumb]:size-[11px] [&::-webkit-slider-thumb]:appearance-none [&::-webkit-slider-thumb]:rounded-full [&::-webkit-slider-thumb]:bg-[#007acc]"
          style={{ background: `linear-gradient(to right, #007acc ${position}%, #cccedb ${position}%)` }}
        />
      </span>
      <button type="button" aria-label="Zoom in" className="mr-2 ml-[6px]">
        <svg width="11" height="11" viewBox="0 0 11 11">
          <circle cx="5.500" cy="5.500" r="5.500" fill="#cccedb" />
          <path d="M2 5.500h7M5.500 2v7" stroke="#fff" />
        </svg>
      </button>
    </div>
  );
};

const Preview = () => (
  <section className="flex min-w-0 flex-1 flex-col border-r border-[#cccedb]">
    <PreviewToolbar />
    <div className="flex min-h-0 flex-1">
      <div className="flex min-h-0 min-w-0 flex-1 flex-col overflow-hidden bg-[linear-gradient(135deg,#e6e6e6_25%,#f1f1f1_25%,#f1f1f1_50%,#e6e6e6_50%,#e6e6e6_75%,#f1f1f1_75%)] bg-size-[4px_4px] pt-[15px] pr-4 pl-[17px]">
        <ReportPage />
      </div>
      <div className="flex w-[18px] shrink-0 items-end justify-center pb-[6px]">
        <svg width="8" height="6" viewBox="0 0 8 6" aria-hidden="true"><path d="M0 0h8L4 5z" fill="#6d6d6d" /></svg>
      </div>
    </div>
    <div className="flex h-4 shrink-0 items-center justify-between pr-6 pl-[5px] text-[#c2c3c9]">
      <svg width="6" height="8" viewBox="0 0 6 8" aria-hidden="true"><path d="M5 0v8L0 4z" fill="currentColor" /></svg>
      <svg width="6" height="8" viewBox="0 0 6 8" aria-hidden="true"><path d="M0 0v8l5-4z" fill="currentColor" /></svg>
    </div>
    <ViewBar />
  </section>
);

/* ---------- toolbox ---------- */

const Toolbox = () => {
  const [active, setActive] = useState("Pointer");
  return (
    <aside className="flex w-[192px] shrink-0 flex-col border border-[#cccedb] bg-[#f5f5f5]">
      <div className="flex h-[27px] shrink-0 items-center border-b border-[#cccedb] pl-2">
        <h2 className="text-xs font-bold text-[#383838]">Toolbox</h2>
        <button type="button" aria-label="Auto hide" className="mr-[22px] ml-auto">
          <svg width="8" height="10" viewBox="0 0 8 10" fill="none">
            <path d="M2 1h4v5H2zM0 6.500h8M4 6.500V10" stroke={DARK} strokeWidth="1.100" />
            <path d="M4.500 1H6v5H4.500z" fill={DARK} />
          </svg>
        </button>
        <button type="button" aria-label="Close toolbox" className="mr-[10px]">
          <svg width="10" height="10" viewBox="0 0 10 10"><path d="M1 1l8 8M9 1L1 9" stroke="#555" strokeWidth="1.500" /></svg>
        </button>
      </div>
      <div className="relative min-h-0 flex-1 overflow-hidden px-px">
        <h3 className="h-[26px] pl-2 text-[11px] leading-[26px] font-bold text-[#999]">Standard Controls</h3>
        {Object.keys(toolIcons).map((name) => (
          <button
            key={name}
            type="button"
            onClick={() => setActive(name)}
            className={clsx(
              "flex h-[46px] w-full items-center gap-[5px] pl-2 text-[11px]",
              active === name && "bg-[#007acc] text-white"
            )}
          >
            <Icon w={32} h={32}>{toolIcons[name]}</Icon>
            {name}
          </button>
        ))}
        <svg width="8" height="6" viewBox="0 0 8 6" aria-hidden="true" className="absolute right-[11px] bottom-3">
          <path d="M1 0h6L4 5z" fill="#6d6d6d" />
        </svg>
      </div>
    </aside>
  );
};

const StatusBar = () => (
  <footer className="flex h-[29px] shrink-0 items-end justify-end bg-[#f5f5f5] pr-[2px] pb-[2px]">
    <svg width="12" height="12" viewBox="0 0 12 12" fill="#cccedb" aria-hidden="true">
      <path d="M9 1h2v2H9zM5 5h2v2H5zM9 5h2v2H9zM1 9h2v2H1zM5 9h2v2H5zM9 9h2v2H9z" />
    </svg>
  </footer>
);

export default function App() {
  return (
    <div className="flex h-screen flex-col overflow-hidden bg-[#eeeef2] font-['Open_Sans','Noto_Sans',sans-serif] text-[#424242]">
      <TitleBar />
      <StandardToolbar />
      <ConnectionToolbar />
      <main className="flex min-h-0 flex-1 gap-1 pt-[2px] pr-[2px] pb-px pl-[3px]">
        <div className="flex min-w-0 flex-1 flex-col">
          <DocumentTabs />
          <div className="flex min-h-0 flex-1 border-b border-[#cccedb] bg-[#f5f5f5]">
            <ReportTree />
            <div className="flex w-[11px] shrink-0 items-center justify-center">
              <svg width="5" height="8" viewBox="0 0 5 8" fill="none" aria-hidden="true">
                <path d="M4 1L1 4l3 3" stroke="#666" strokeWidth="1.200" />
              </svg>
            </div>
            <Preview />
          </div>
        </div>
        <Toolbox />
      </main>
      <StatusBar />
    </div>
  );
}
